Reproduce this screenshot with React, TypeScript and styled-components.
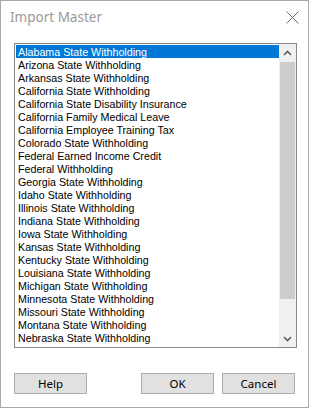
import React, { useState } from 'react';
import styled, { createGlobalStyle } from 'styled-components';

const GlobalStyle = createGlobalStyle`
  html, body {
    margin: 0;
    padding: 0;
    background: #ffffff;
  }
`;

const items = [
  'Alabama State Withholding',
  'Arizona State Withholding',
  'Arkansas State Withholding',
  'California State Withholding',
  'California State Disability Insurance',
  'California Family Medical Leave',
  'California Employee Training Tax',
  'Colorado State Withholding',
  'Federal Earned Income Credit',
  'Federal Withholding',
  'Georgia State Withholding',
  'Idaho State Withholding',
  'Illinois State Withholding',
  'Indiana State Withholding',
  'Iowa State Withholding',
  'Kansas State Withholding',
  'Kentucky State Withholding',
  'Louisiana State Withholding',
  'Michigan State Withholding',
  'Minnesota State Withholding',
  'Missouri State Withholding',
  'Montana State Withholding',
  'Nebraska State Withholding',
];

const Window = styled.div`
  width: 309px;
  height: 408px;
  box-sizing: border-box;
  border: 1px solid #a9a9a9;
  background: #ffffff;
  display: flex;
  flex-direction: column;
`;

const TitleBar = styled.div`
  height: 31px;
  display: flex;
  align-items: center;
  justify-content: space-between;
  padding: 0 9px 0 9px;
`;

const Title = styled.span`
  font-family: 'Noto Sans', 'Open Sans', sans-serif;
  font-size: 13.5px;
  color: #9a9a9a;
  margin-top: 1px;
`;

const CloseButton = styled.button`
  width: 14px;
  height: 14px;
  padding: 0;
  margin: 1px 0 0 0;
  border: none;
  background: transparent;
  display: flex;
  align-items: center;
  justify-content: center;
`;

const Body = styled.div`
  flex: 1;
  display: flex;
  flex-direction: column;
  padding: 11px 11px 0 13px;
`;

const ListBox = styled.div`
  height: 305px;
  box-sizing: border-box;
  border: 1px solid #828790;
  display: flex;
`;

const List = styled.ul`
  flex: 1;
  margin: 0;
  padding: 1px 0 0 1px;
  list-style: none;
  overflow: hidden;
`;

const Row = styled.li<{ $selected?: boolean }>`
  height: 13px;
  line-height: 14px;
  padding-left: 2px;
  font-family: 'Liberation Sans', Arial, sans-serif;
  font-size: 10.7px;
  white-space: nowrap;
  color: ${(p) => (p.$selected ? '#ffffff' : '#000000')};
  background: ${(p) => (p.$selected ? '#0078d7' : 'transparent')};
  cursor: default;
`;

const ScrollBar = styled.div`
  width: 17px;
  background: #f0f0f0;
  display: flex;
  flex-direction: column;
`;

const ArrowButton = styled.div`
  height: 17px;
  display: flex;
  align-items: center;
  justify-content: center;
`;

const Track = styled.div`
  flex: 1;
  display: flex;
  flex-direction: column;
  padding: 1px 0 31px;
`;

const Thumb = styled.div`
  flex: 1;
  margin: 0 1px;
  background: #cdcdcd;
`;

const ButtonRow = styled.div`
  display: flex;
  align-items: center;
  gap: 8px;
  margin-top: 25px;
  padding-right: 2px;
`;

const Spacer = styled.div`
  flex: 1;
`;

const DialogButton = styled.button`
  width: 73px;
  height: 21px;
  box-sizing: border-box;
  border: 1px solid #adadad;
  background: #e1e1e1;
  font-family: 'Noto Sans', 'Open Sans', sans-serif;
  font-size: 11.5px;
  color: #000000;
  padding: 0;
  display: flex;
  align-items: center;
  justify-content: center;
`;

const Chevron = ({ up }: { up?: boolean }) => (
  <svg width="9" height="6" viewBox="0 0 9 6">
    <path
      d={up ? 'M1 5 L4.5 1.5 L8 5' : 'M1 1 L4.5 4.5 L8 1'}
      fill="none"
      stroke="#606060"
      strokeWidth="1.6"
    />
  </svg>
);

const App: React.FC = () => {
  const [selected, setSelected] = useState(0);

  return (
    <>
      <GlobalStyle />
      <Window>
        <TitleBar>
          <Title>Import Master</Title>
          <CloseButton aria-label="Close">
            <svg width="13" height="13" viewBox="0 0 13 13">
              <path d="M0.5 0.5 L12.5 12.5 M12.5 0.5 L0.5 12.5" stroke="#6b6b6b" strokeWidth="1" />
            </svg>
          </CloseButton>
        </TitleBar>
        <Body>
          <ListBox>
            <List>
              {items.map((name, i) => (
                <Row key={name} $selected={i === selected} onClick={() => setSelected(i)}>
                  {name}
                </Row>
              ))}
            </List>
            <ScrollBar>
              <ArrowButton>
                <Chevron up />
              </ArrowButton>
              <Track>
                <Thumb />
              </Track>
              <ArrowButton>
                <Chevron />
              </ArrowButton>
            </ScrollBar>
          </ListBox>
          <ButtonRow>
            <DialogButton>Help</DialogButton>
            <Spacer />
            <DialogButton>OK</DialogButton>
            <DialogButton>Cancel</DialogButton>
          </ButtonRow>
        </Body>
      </Window>
    </>
  );
};

export default App;
